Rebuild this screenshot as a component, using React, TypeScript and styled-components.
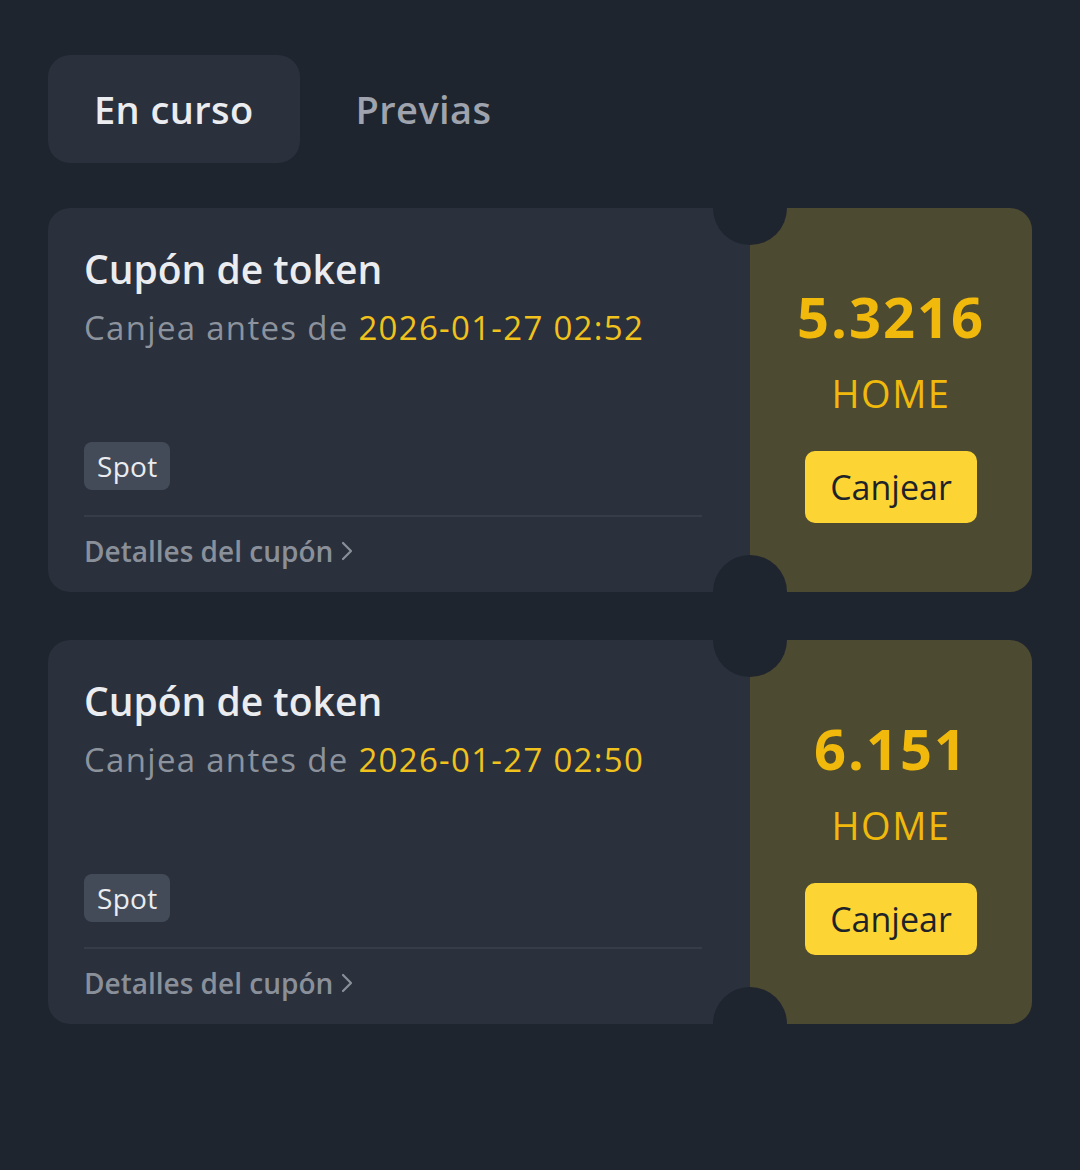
import styled, { createGlobalStyle } from "styled-components";

const GlobalStyle = createGlobalStyle`
    body {
        margin: 0;
        background: #1f252f;
        font-family: "Open Sans", Lato, sans-serif;
    }
`;

const Page = styled.main`
    padding: 55px 48px 48px;
    display: flex;
    flex-direction: column;
    gap: 45px;
`;

const Tabs = styled.div`
    display: flex;
    gap: 10px;
`;

const Tab = styled.div<{ $active?: boolean }>`
    height: 108px;
    padding: 0 46px;
    display: flex;
    align-items: center;
    border-radius: 22px;
    font-size: 38px;
    font-weight: 600;
    letter-spacing: 0.4px;
    background: ${(p) => (p.$active ? "#2a303c" : "transparent")};
    color: ${(p) => (p.$active ? "#eaecef" : "#9ea3ad")};
`;

const List = styled.div`
    display: flex;
    flex-direction: column;
    gap: 48px;
`;

const Card = styled.div`
    position: relative;
    height: 384px;
    display: grid;
    grid-template-columns: 1fr 282px;
    border-radius: 22px;
    overflow: hidden;
`;

const Notch = styled.span<{ $side: "top" | "bottom" }>`
    position: absolute;
    left: 665px;
    ${(p) => p.$side}: -37px;
    width: 74px;
    height: 74px;
    border-radius: 50%;
    background: #1f252f;
`;

const Info = styled.div`
    background: #2a303c;
    padding: 37px 48px 0 36px;
    display: flex;
    flex-direction: column;
`;

const Title = styled.div`
    font-size: 39px;
    font-weight: 600;
    color: #eaecef;
    line-height: 48px;
`;

const Deadline = styled.div`
    margin-top: 13px;
    font-size: 33px;
    letter-spacing: 1.3px;
    color: #8d939d;
    line-height: 44px;
`;

const DateText = styled.span`
    color: #f0c21b;
`;

const Badge = styled.span`
    align-self: flex-start;
    margin-top: 92px;
    height: 48px;
    padding: 0 12px 0 13px;
    display: flex;
    align-items: center;
    border-radius: 8px;
    background: #434b59;
    color: #eaecef;
    font-size: 28px;
    letter-spacing: 0.3px;
`;

const Divider = styled.div`
    margin-top: 25px;
    height: 2px;
    background: #363d49;
`;

const DetailsLink = styled.div`
    margin-top: 15px;
    display: flex;
    align-items: center;
    gap: 8px;
    font-size: 28px;
    line-height: 38px;
    font-weight: 600;
    color: #8a909a;
`;

const Reward = styled.div`
    background: #4c4a31;
    display: flex;
    flex-direction: column;
    align-items: center;
    padding-top: 76px;
`;

const Amount = styled.div`
    font-size: 56px;
    font-weight: 700;
    letter-spacing: 2px;
    color: #f0b90b;
    line-height: 64px;
`;

const Unit = styled.div`
    margin-top: 22px;
    font-size: 38px;
    font-weight: 500;
    letter-spacing: 1.5px;
    color: #f0b90b;
    line-height: 46px;
`;

const RedeemButton = styled.button`
    margin-top: 35px;
    width: 172px;
    height: 72px;
    border: none;
    border-radius: 10px;
    background: #fcd535;
    color: #1e2329;
    font-family: inherit;
    font-size: 34px;
    font-weight: 500;
`;

const coupons = [
    { amount: "5.3216", date: "2026-01-27 02:52" },
    { amount: "6.151", date: "2026-01-27 02:50" },
];

function Chevron() {
    return (
        <svg width="12" height="20" viewBox="0 0 12 20" fill="none">
            <path d="M2 2l8 8-8 8" stroke="#8a909a" strokeWidth="2.2" strokeLinecap="round" strokeLinejoin="round" />
        </svg>
    );
}

export default function App() {
    return (
        <>
            <GlobalStyle />
            <Page>
                <Tabs>
                    <Tab $active>En curso</Tab>
                    <Tab>Previas</Tab>
                </Tabs>
                <List>
                    {coupons.map((c) => (
                        <Card key={c.amount}>
                            <Info>
                                <Title>Cupón de token</Title>
                                <Deadline>
                                    Canjea antes de <DateText>{c.date}</DateText>
                                </Deadline>
                                <Badge>Spot</Badge>
                                <Divider />
                                <DetailsLink>
                                    Detalles del cupón <Chevron />
                                </DetailsLink>
                            </Info>
                            <Reward>
                                <Amount>{c.amount}</Amount>
                                <Unit>HOME</Unit>
                                <RedeemButton>Canjear</RedeemButton>
                            </Reward>
                            <Notch $side="top" />
                            <Notch $side="bottom" />
                        </Card>
                    ))}
                </List>
            </Page>
        </>
    );
}
